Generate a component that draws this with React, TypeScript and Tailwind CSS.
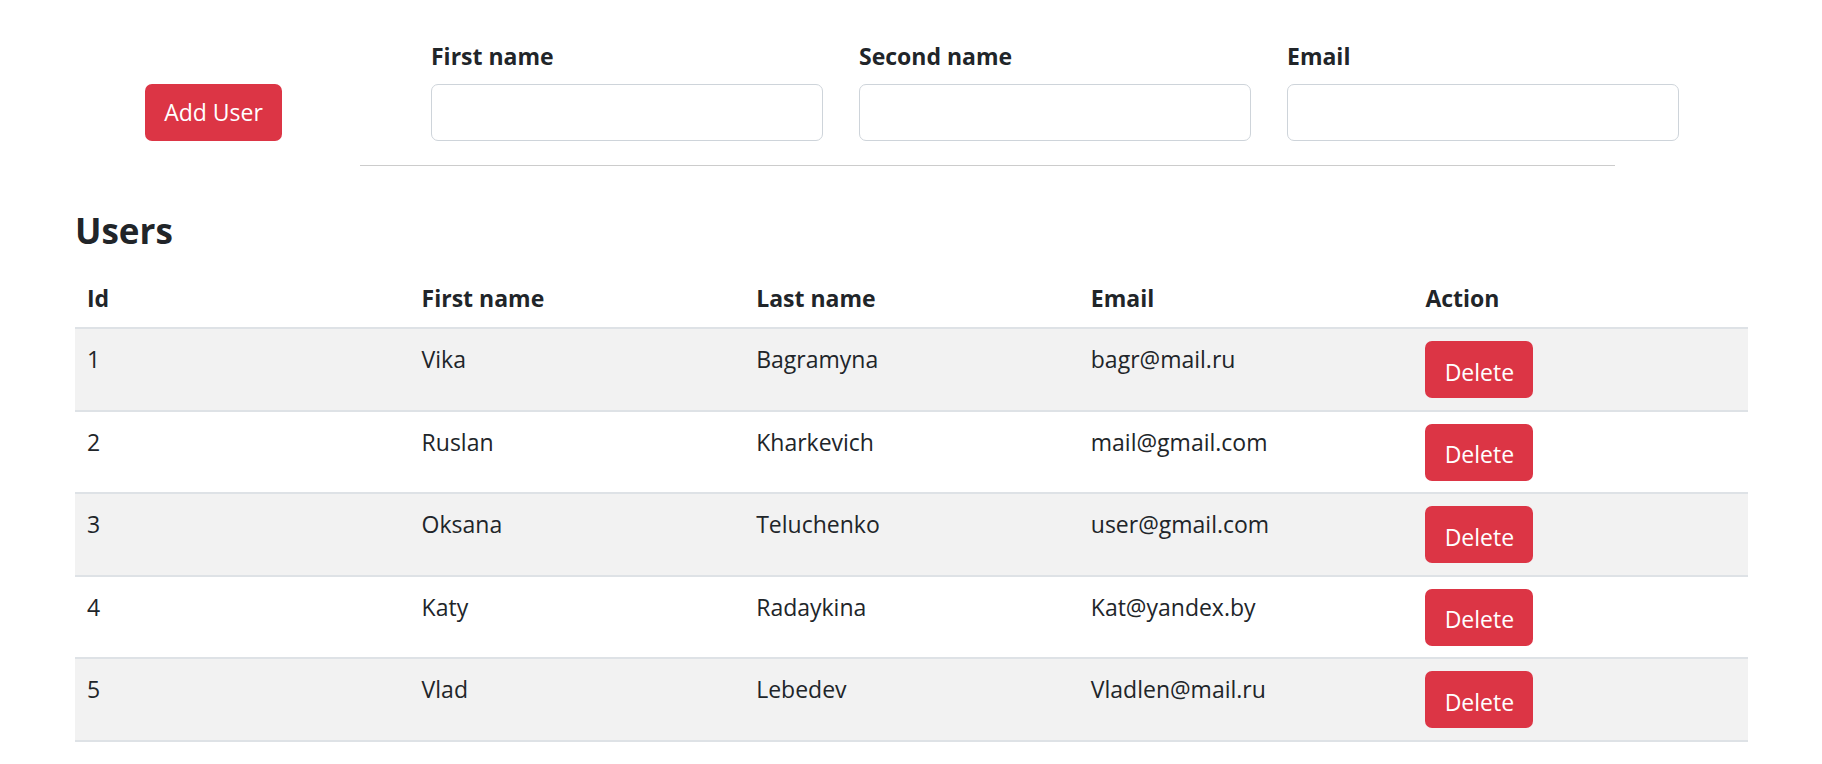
import React from "react";

const users = [
  { id: 1, first: "Vika", last: "Bagramyna", email: "bagr@mail.ru" },
  { id: 2, first: "Ruslan", last: "Kharkevich", email: "mail@gmail.com" },
  { id: 3, first: "Oksana", last: "Teluchenko", email: "user@gmail.com" },
  { id: 4, first: "Katy", last: "Radaykina", email: "Kat@yandex.by" },
  { id: 5, first: "Vlad", last: "Lebedev", email: "Vladlen@mail.ru" },
];

function Field({ label }: { label: string }) {
  return (
    <div className="flex w-[392px] flex-col">
      <label className="mb-[10px] text-[23px] font-bold leading-[36px]">{label}</label>
      <input
        type="text"
        className="h-[57px] w-full rounded-[7px] border border-[#ced4da] bg-white px-[18px] text-[23px] outline-none"
      />
    </div>
  );
}

export default function App() {
  return (
    <div
      className="min-h-[764px] bg-white text-[#212529]"
      style={{ fontFamily: '"Open Sans", "Noto Sans", sans-serif' }}
    >
      <div className="flex items-end pt-[38px] pl-[145px]">
        <button className="h-[57px] w-[137px] rounded-[7px] bg-[#dc3545] text-[23px] text-white">
          Add User
        </button>
        <div className="ml-[149px] flex gap-[36px]">
          <Field label="First name" />
          <Field label="Second name" />
          <Field label="Email" />
        </div>
      </div>
      <div className="ml-[360px] mt-[24px] h-px w-[1255px] bg-[#cccccc]" />

      <div className="px-[75px]">
        <h2 className="mt-[42px] mb-[14px] text-[35px] font-bold leading-[46px]">Users</h2>
        <div className="w-[1673px]">
          <div className="grid grid-cols-5 text-[23px] font-bold leading-[36px]">
            {["Id", "First name", "Last name", "Email", "Action"].map((h) => (
              <div key={h} className="px-[12px] pt-[12px] pb-[11px]">
                {h}
              </div>
            ))}
          </div>
          {users.map((u, i) => (
            <div
              key={u.id}
              className={`grid grid-cols-5 border-t-2 border-[#dee2e6] text-[23px] leading-[36px] ${
                i % 2 === 0 ? "bg-[#f2f2f2]" : "bg-white"
              } ${i === users.length - 1 ? "border-b-2" : ""}`}
            >
              <div className="px-[12px] pt-[12px] pb-[11.5px]">{u.id}</div>
              <div className="px-[12px] pt-[12px] pb-[11.5px]">{u.first}</div>
              <div className="px-[12px] pt-[12px] pb-[11.5px]">{u.last}</div>
              <div className="px-[12px] pt-[12px] pb-[11.5px]">{u.email}</div>
              <div className="px-[12px] pt-[12px] pb-[11.5px]">
                <button className="h-[57px] w-[108px] rounded-[7px] bg-[#dc3545] pt-[4px] text-[23px] text-white">
                  Delete
                </button>
              </div>
            </div>
          ))}
        </div>
      </div>
    </div>
  );
}
